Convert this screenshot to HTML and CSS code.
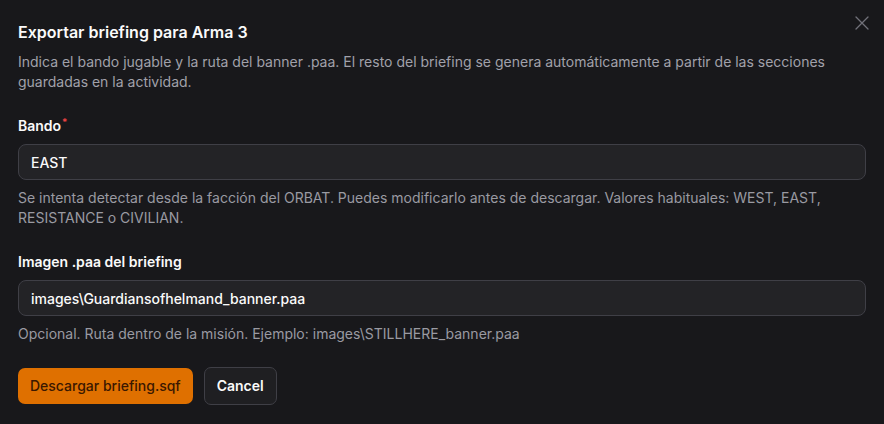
FILE: index.html
```html
<!DOCTYPE html>
<html lang="es">
<head>
<meta charset="utf-8">
<title>Exportar briefing</title>
<link rel="stylesheet" href="styles.css">
</head>
<body>
<div class="dialog">
  <button class="close" aria-label="Cerrar">
    <svg width="16" height="16" viewBox="0 0 16 16" fill="none" stroke="currentColor" stroke-width="1.3" stroke-linecap="round"><path d="M2 2L14 14M14 2L2 14"/></svg>
  </button>
  <h2 class="title">Exportar briefing para Arma 3</h2>
  <p class="desc">Indica el bando jugable y la ruta del banner .paa. El resto del briefing se genera automáticamente a partir de las secciones guardadas en la actividad.</p>

  <div class="field">
    <label class="label">Bando<span class="req">*</span></label>
    <div class="input">EAST</div>
    <p class="hint">Se intenta detectar desde la facción del ORBAT. Puedes modificarlo antes de descargar. Valores habituales: WEST, EAST, RESISTANCE o CIVILIAN.</p>
  </div>

  <div class="field">
    <label class="label">Imagen .paa del briefing</label>
    <div class="input">images\Guardiansofhelmand_banner.paa</div>
    <p class="hint">Opcional. Ruta dentro de la misión. Ejemplo: images\STILLHERE_banner.paa</p>
  </div>

  <div class="actions">
    <button class="btn primary">Descargar briefing.sqf</button>
    <button class="btn secondary">Cancel</button>
  </div>
</div>
</body>
</html>
```
FILE: styles.css
```css
* { box-sizing: border-box; }
html, body { margin: 0; padding: 0; }
body {
  background: #18181b;
  font-family: Inter, "Noto Sans", sans-serif;
  color: #fafafa;
  width: 884px;
  height: 424px;
  overflow: hidden;
}
.dialog {
  position: relative;
  padding: 20px 18px 20px 18px;
}
.close {
  position: absolute;
  top: 15px;
  right: 14px;
  width: 16px;
  height: 16px;
  padding: 0;
  border: 0;
  background: none;
  color: #71717a;
  display: flex;
}
.title {
  margin: 0;
  font-size: 16px;
  line-height: 24px;
  font-weight: 600;
  color: #fafafa;
}
.desc {
  margin: 8px 0 0;
  font-size: 14px;
  line-height: 20px;
  color: #a1a1aa;
}
.field {
  margin-top: 24px;
  display: flex;
  flex-direction: column;
}
.label {
  font-size: 14px;
  line-height: 20px;
  font-weight: 600;
  color: #fafafa;
}
.req {
  color: #ef4444;
  font-size: 10px;
  vertical-align: top;
  line-height: 12px;
  margin-left: 1px;
}
.input {
  margin-top: 8px;
  height: 36px;
  border: 1px solid #3f3f46;
  border-radius: 8px;
  background: #232326;
  padding: 0 12px;
  display: flex;
  align-items: center;
  font-size: 14px;
  font-weight: 500;
  color: #fafafa;
}
.hint {
  margin: 8px 0 0;
  font-size: 14px;
  line-height: 20px;
  color: #9a9aa2;
}
.actions {
  margin-top: 24px;
  display: flex;
  gap: 11px;
}
.btn {
  height: 36px;
  padding: 0 12px;
  border-radius: 7px;
  font-family: inherit;
  font-size: 14px;
  line-height: 20px;
}
.primary {
  background: #df7000;
  border: 0;
  color: #3b1800;
  font-weight: 500;
}
.secondary {
  background: #1f1f22;
  border: 1px solid #3f3f46;
  color: #fafafa;
  font-weight: 600;
  height: 38px;
  margin-top: -1px;
}
```
